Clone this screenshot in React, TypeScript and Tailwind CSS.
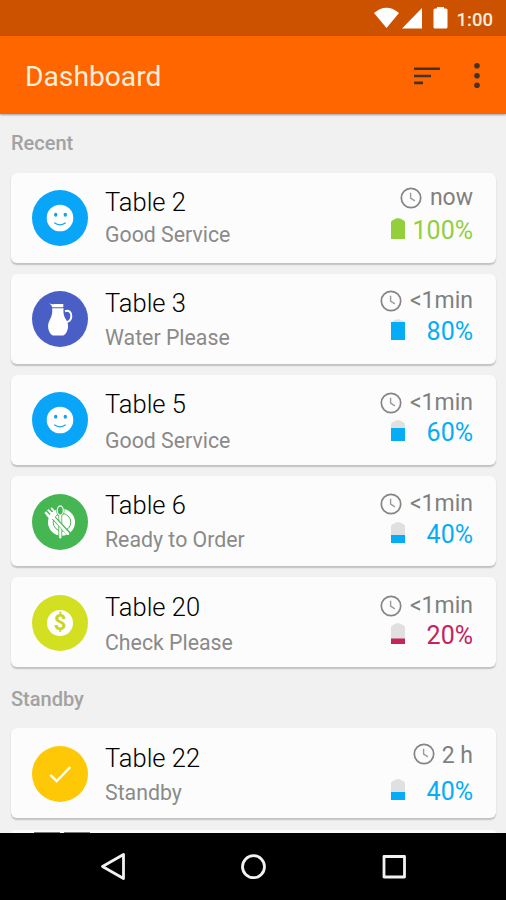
import type { ReactNode } from "react";

type Row = {
  title: string;
  status: string;
  time: string;
  level: number;
  icon: "smile" | "jug" | "meal" | "money" | "check";
  disc: string;
  levelColor: string;
  titlePad: string;
  statusPad: string;
  clockPad: string;
  timePad: string;
  timeRow: string;
};

const recent: Row[] = [
  { title: "Table 2", status: "Good Service", time: "now", level: 100, icon: "smile", disc: "mt-[17px] bg-[#08a5f8]", levelColor: "text-[#93cf3d]", titlePad: "pt-[14px]", statusPad: "pt-[5px]", clockPad: "pt-[14px]", timePad: "pt-[11px]", timeRow: "h-[43px] gap-[8px]" },
  { title: "Table 3", status: "Water Please", time: "<1min", level: 80, icon: "jug", disc: "mt-[17px] bg-[#4a5fc6]", levelColor: "text-[#05adf7]", titlePad: "pt-[14px]", statusPad: "pt-[7px]", clockPad: "pt-[16px]", timePad: "pt-[13px]", timeRow: "h-[43px] gap-[8px]" },
  { title: "Table 5", status: "Good Service", time: "<1min", level: 60, icon: "smile", disc: "mt-[17px] bg-[#08a5f8]", levelColor: "text-[#05adf7]", titlePad: "pt-[14px]", statusPad: "pt-[9px]", clockPad: "pt-[17px]", timePad: "pt-[14px]", timeRow: "h-[43px] gap-[8px]" },
  { title: "Table 6", status: "Ready to Order", time: "<1min", level: 40, icon: "meal", disc: "mt-[17.500px] bg-[#46b653]", levelColor: "text-[#05adf7]", titlePad: "pt-[14px]", statusPad: "pt-[7px]", clockPad: "pt-[17px]", timePad: "pt-[14px]", timeRow: "h-[44px] gap-[8px]" },
  { title: "Table 20", status: "Check Please", time: "<1min", level: 20, icon: "money", disc: "mt-[18px] bg-[#d3e021]", levelColor: "text-[#c42360]", titlePad: "pt-[15px]", statusPad: "pt-[8px]", clockPad: "pt-[17.500px]", timePad: "pt-[15px]", timeRow: "h-[44px] gap-[8px]" },
];

const standby: Row[] = [
  { title: "Table 22", status: "Standby", time: "2 h", level: 40, icon: "check", disc: "mt-[18px] bg-[#ffc806]", levelColor: "text-[#05adf7]", titlePad: "pt-[15px]", statusPad: "pt-[7px]", clockPad: "pt-[15px]", timePad: "pt-[14px]", timeRow: "h-[49px] gap-[7px]" },
];

function Clock() {
  return (
    <svg width="22" height="22" viewBox="0 0 22 22" fill="none" stroke="#858585">
      <circle cx="11" cy="11" r="9.7" strokeWidth="1.7" />
      <path d="M10.6 5.8v5.4l4.3 2.7" strokeWidth="1.4" stroke="#9a9a9a" />
    </svg>
  );
}

const fillTop: Record<number, number> = { 100: 0, 80: 3, 60: 8, 40: 13, 20: 15.5 };

function Battery({ level }: { level: number }) {
  const y = fillTop[level];
  return (
    <svg className="-mt-[6px]" width="14" height="21" viewBox="0 0 14 21">
      <path d="M0 4.500q0-2 2-2.500l2-1q1-.8 2-.8h2q1 0 2 .8l2 1q2 .5 2 2.500V21H0z" fill={level === 100 ? "currentColor" : "#e0e0e0"} />
      {level < 100 && <rect x="0" y={y} width="14" height={21 - y} fill="currentColor" />}
    </svg>
  );
}

function Glyph({ icon }: { icon: Row["icon"] }) {
  if (icon === "smile")
    return (
      <svg width="56" height="56" viewBox="0 0 56 56">
        <circle cx="28" cy="28" r="13.300" fill="#fff" />
        <ellipse cx="23.700" cy="24.800" rx="1.700" ry="2" fill="#0fa3f6" />
        <ellipse cx="33.300" cy="24.800" rx="1.700" ry="2" fill="#0fa3f6" />
        <path d="M22.300 32.800q5.700 4 11.400 0" fill="none" stroke="#0fa3f6" strokeWidth="1.300" />
      </svg>
    );
  if (icon === "jug")
    return (
      <svg width="56" height="56" viewBox="0 0 56 56">
        <path d="M17 12.300q3 1.200 6 .7h8.300v3.200H20.200q-.3-2.400-3.200-3.900z" fill="#fff" />
        <path d="M20.200 17.200h11.300c-.3 6 .6 8.300 2.600 11.500 2.700 4.500 2.500 8.500.5 12.300-1.500 2.700-2.600 3.600-4.800 3.600h-7.300c-2.400 0-3.700-1-5-3.600-2-3.900-2-8 .3-12.300 1.900-3.400 2.700-6 2.400-11.500z" fill="#fff" />
        <path d="M33 20.200c4-1.400 6.600 1.300 6.300 5.300-.2 3.200-1.800 5.200-5 5.500" fill="none" stroke="#fff" strokeWidth="2" />
      </svg>
    );
  if (icon === "meal")
    return (
      <svg width="56" height="56" viewBox="0 0 56 56">
        <circle cx="29.500" cy="28.300" r="13.500" fill="#fff" />
        <circle cx="30" cy="28.300" r="8.800" fill="none" stroke="#46b653" strokeWidth="1" />
        <path d="M28.300 20v22" stroke="#46b653" strokeWidth="3.800" strokeLinecap="round" />
        <ellipse cx="28.300" cy="16.500" rx="4.200" ry="6" fill="#46b653" />
        <ellipse cx="28.300" cy="16.500" rx="3" ry="4.600" fill="none" stroke="#fff" strokeWidth="1.200" />
        <path d="M28.300 22v21.500" stroke="#fff" strokeWidth="2.200" strokeLinecap="round" />
        <path d="M18 20l18.500 19.500" stroke="#46b653" strokeWidth="4.600" strokeLinecap="round" />
        <path d="M12.500 18.700l1.500-1.400 3.700 3.600.9-.9-3.500-3.800 1.400-1.300 3.700 3.600 1-1-2.700-3 1.300-1.200 4 4.500q1.600 2.700-.6 5l-.3.700 14 15.300q.8 1.500-.4 2.200-1 .4-1.900-.5L21 25q-3 1-5-1.500z" fill="#fff" />
      </svg>
    );
  if (icon === "money")
    return (
      <span className="flex size-[26px] items-center justify-center rounded-full bg-white text-[22px] leading-none font-bold text-[#c9d61d]">$</span>
    );
  return (
    <svg width="56" height="56" viewBox="0 0 56 56" fill="none" stroke="#fff" strokeWidth="2.400">
      <path d="M18.300 28.800l6.400 6.300 13.600-14.100" />
    </svg>
  );
}

function Card({ row }: { row: Row }) {
  return (
    <article className="flex h-[90px] rounded-[6px] bg-[#fcfcfc] pr-[23px] pl-[21px] shadow-[0_1.500px_1.500px_rgba(0,0,0,0.2)]">
      <div className={`flex size-[56px] shrink-0 items-center justify-center rounded-full ${row.disc}`}>
        <Glyph icon={row.icon} />
      </div>
      <div className={`ml-[17px] flex-1 ${row.titlePad}`}>
        <h2 className="text-[25.500px] leading-[30px] font-light text-[#000]">{row.title}</h2>
        <p className={`text-[21.300px] leading-[26px] text-[#8a8a8a] ${row.statusPad}`}>{row.status}</p>
      </div>
      <div className="flex w-[110px] flex-col">
        <div className={`flex shrink-0 justify-end ${row.timeRow}`}>
          <div className={row.clockPad}><Clock /></div>
          <span className={`text-[23px] leading-[28px] whitespace-nowrap text-[#808080] ${row.timePad}`}>{row.time}</span>
        </div>
        <div className={`flex h-[30px] shrink-0 items-center justify-between pl-[28px] ${row.levelColor}`}>
          <Battery level={row.level} />
          <span className="text-[25px] leading-[30px]">{row.level}%</span>
        </div>
      </div>
    </article>
  );
}

function Heading({ children }: { children: ReactNode }) {
  return <h3 className="text-[20px] leading-[24px] font-medium text-[#a2a2a2]">{children}</h3>;
}

export default function App() {
  return (
    <div className="flex h-[900px] w-[506px] flex-col overflow-hidden bg-[#f1f1f1] font-[Roboto,sans-serif]">
      <div className="flex h-[36px] shrink-0 items-center justify-end bg-[#cc5200] pr-[13px]">
        <svg width="82" height="36" viewBox="0 0 82 36" fill="#fff">
          <path d="M0 13q12.500-10.500 25 0L12.500 28z" />
          <path d="M48 8v20.500H28z" />
          <path d="M59.500 10q0-1.500 1.500-1.500h2V7h7v1.500h2q1.500 0 1.500 1.500v17q0 1.500-1.500 1.500H61q-1.500 0-1.500-1.500z" />
        </svg>
        <span className="ml-px pt-[4px] text-[18.500px] leading-none font-medium text-[#ffeede]">1:00</span>
      </div>
      <header className="z-10 flex h-[78px] shrink-0 items-center bg-[#ff6600] pr-[20px] pl-[25px] shadow-[0_1px_2px_rgba(0,0,0,0.35)]">
        <h1 className="flex-1 pt-[4px] text-[28.200px] leading-none text-[#ffefd8]">Dashboard</h1>
        <svg width="80" height="30" viewBox="0 0 80 30" fill="#443326">
          <path d="M8 7.500h26v2.600H8zM8 14.700h17v2.600H8zM8 21.600h9v2.600H8z" />
          <circle cx="71" cy="5.700" r="2.800" />
          <circle cx="71" cy="15.700" r="2.800" />
          <circle cx="71" cy="25.300" r="2.800" />
        </svg>
      </header>
      <main className="h-[719px] shrink-0 overflow-hidden pr-[10px] pl-[11px]">
        <div className="h-[59px] pt-[17px]"><Heading>Recent</Heading></div>
        <section className="flex flex-col gap-[11px]">
          {recent.map((row) => <Card key={row.title} row={row} />)}
        </section>
        <div className="h-[61px] pt-[20px]"><Heading>Standby</Heading></div>
        <section className="flex flex-col gap-[12px]">
          {standby.map((row) => <Card key={row.title} row={row} />)}
          <div className="flex h-[3px] items-end gap-[4px] rounded-t-[3px] bg-[#fcfcfc] pl-[23px]">
            <i className="h-px w-[26px] bg-[#777]" />
            <i className="h-px w-[26px] bg-[#777]" />
          </div>
        </section>
      </main>
      <nav className="flex h-[67px] shrink-0 items-center justify-center bg-black">
        <svg width="506" height="67" viewBox="0 0 506 67" fill="none" stroke="#f2f2f2" strokeWidth="2.800" strokeLinejoin="round">
          <path d="M123.500 21.500v24l-21-12z" />
          <circle cx="253.500" cy="33.700" r="11" />
          <rect x="384" y="23.500" width="20.500" height="20.500" />
        </svg>
      </nav>
    </div>
  );
}
